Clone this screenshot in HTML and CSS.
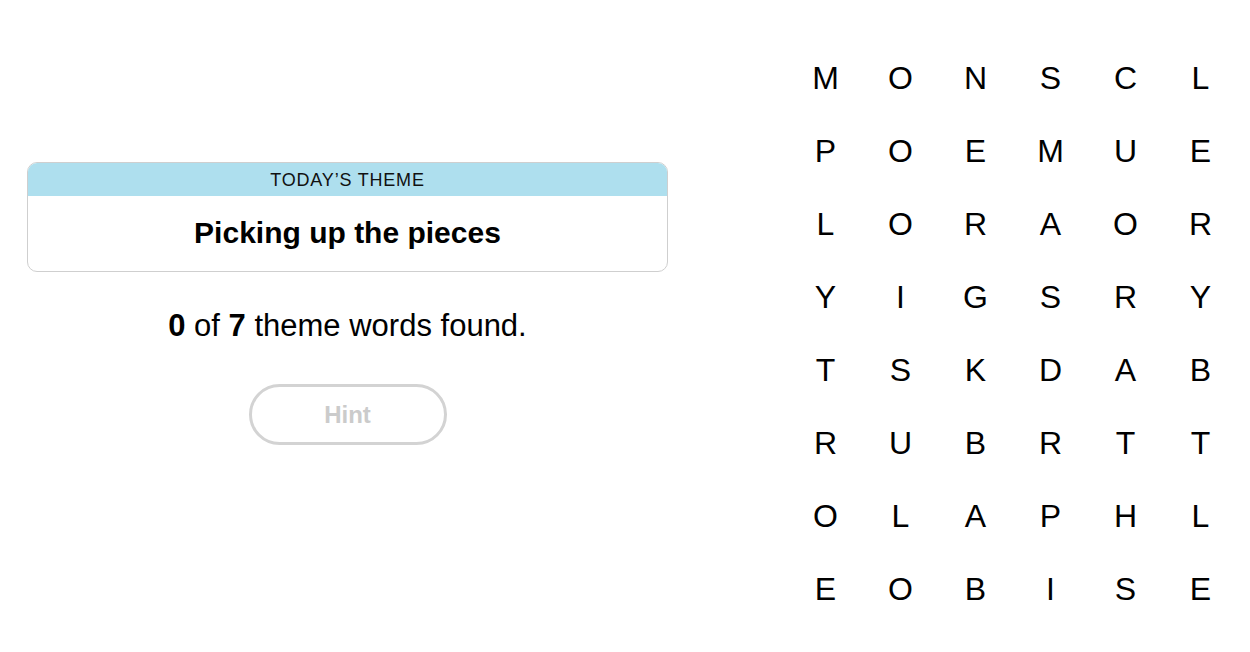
FILE: index.html
```html
<!DOCTYPE html>
<html>
<head>
<meta charset="utf-8">
<link rel="stylesheet" href="styles.css">
</head>
<body>
<main class="page">
  <section class="left">
    <div class="theme-card">
      <div class="theme-head">TODAY’S THEME</div>
      <div class="theme-body">Picking up the pieces</div>
    </div>
    <p class="counter"><b>0</b> of <b>7</b> theme words found.</p>
    <button class="hint" disabled>Hint</button>
  </section>
  <section class="board">
    <span>M</span><span>O</span><span>N</span><span>S</span><span>C</span><span>L</span>
    <span>P</span><span>O</span><span>E</span><span>M</span><span>U</span><span>E</span>
    <span>L</span><span>O</span><span>R</span><span>A</span><span>O</span><span>R</span>
    <span>Y</span><span>I</span><span>G</span><span>S</span><span>R</span><span>Y</span>
    <span>T</span><span>S</span><span>K</span><span>D</span><span>A</span><span>B</span>
    <span>R</span><span>U</span><span>B</span><span>R</span><span>T</span><span>T</span>
    <span>O</span><span>L</span><span>A</span><span>P</span><span>H</span><span>L</span>
    <span>E</span><span>O</span><span>B</span><span>I</span><span>S</span><span>E</span>
  </section>
</main>
</body>
</html>
```
FILE: styles.css
```css
html, body {
  margin: 0;
  padding: 0;
  background: #fff;
}
body {
  font-family: "Liberation Sans", Arial, sans-serif;
  color: #000;
}
.page {
  display: flex;
  width: 1250px;
  height: 652px;
}
.left {
  width: 641px;
  margin-left: 27px;
  padding-top: 162px;
  display: flex;
  flex-direction: column;
  align-items: center;
}
.theme-card {
  width: 100%;
  box-sizing: border-box;
  border: 1px solid #cfcfcf;
  border-radius: 10px;
  overflow: hidden;
}
.theme-head {
  background: #aedfee;
  height: 33px;
  line-height: 35px;
  text-align: center;
  font-size: 18px;
  letter-spacing: 0.8px;
  color: #111;
}
.theme-body {
  height: 76px;
  line-height: 76px;
  text-align: center;
  font-weight: bold;
  font-size: 30px;
  margin-top: -1px;
}
.counter {
  margin: 36px 0 0;
  font-size: 31px;
  line-height: 36px;
  text-align: center;
}
.counter b {
  font-weight: bold;
}
.hint {
  margin-top: 40px;
  width: 198px;
  height: 61px;
  border: 3px solid #d3d3d3;
  border-radius: 31px;
  background: #fff;
  color: #cbcbcb;
  font-family: "Liberation Sans", Arial, sans-serif;
  font-weight: bold;
  font-size: 24px;
  padding: 0;
}
.board {
  margin-left: 120px;
  margin-top: 41px;
  display: grid;
  grid-template-columns: repeat(6, 75px);
  grid-auto-rows: 73px;
  align-self: flex-start;
}
.board span {
  display: flex;
  align-items: center;
  justify-content: center;
  font-size: 32px;
  line-height: 1;
}
```
